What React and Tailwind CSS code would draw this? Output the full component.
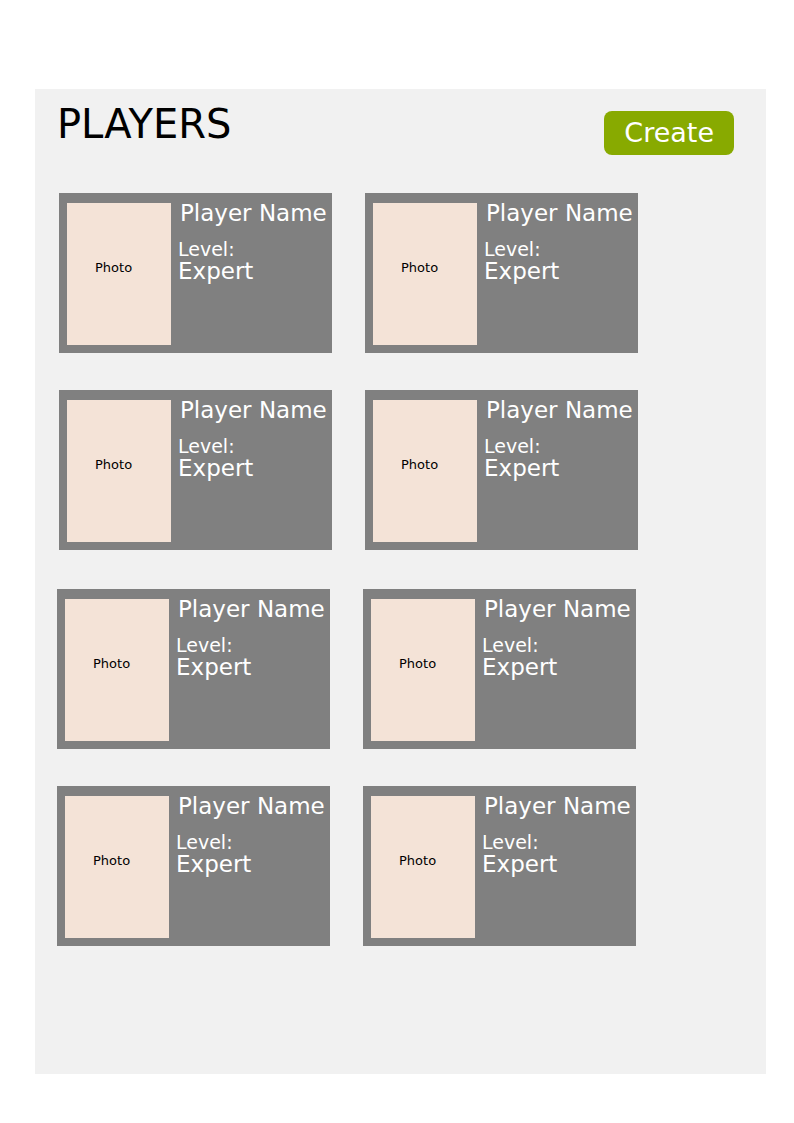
const players = Array.from({ length: 8 }, (_, i) => ({
  id: i + 1,
  name: 'Player Name',
  level: 'Expert',
}));

function PlayerCard({ player }) {
  return (
    <li className="flex min-h-[160px] bg-[#808080] pt-[10px] pb-2 pl-2 text-white">
      <div className="flex w-[104px] shrink-0 items-center bg-[#f4e3d7] pb-3 pl-7 text-[13px] leading-4 text-black">
        Photo
      </div>
      <div className="-mt-[2px] pl-[7px]">
        <h2 className="pl-[2px] text-[23px] leading-6 whitespace-nowrap">{player.name}</h2>
        <dl className="mt-[14px]">
          <dt className="text-[19px] leading-5">Level:</dt>
          <dd className="text-[23px] leading-6">{player.level}</dd>
        </dl>
      </div>
    </li>
  );
}

function PlayerGroup({ items }) {
  return (
    <ul className="grid grid-cols-[repeat(auto-fill,273px)] gap-x-[33px] gap-y-[37px]">
      {items.map((player) => (
        <PlayerCard key={player.id} player={player} />
      ))}
    </ul>
  );
}

export default function App() {
  return (
    <div className="flex min-h-screen flex-col bg-white pt-[89px] pr-7 pb-[49px] pl-[35px] font-['DejaVu_Sans',sans-serif]">
      <main className="grow bg-[#f1f1f1] pt-[10px]">
        <header className="flex items-start justify-between pr-8 pl-[22px]">
          <h1 className="text-[40px] leading-[50px] text-black">PLAYERS</h1>
          <button
            type="button"
            className="mt-3 h-11 rounded-lg bg-[#88aa00] px-5 text-[27px] leading-8 text-white"
          >
            Create
          </button>
        </header>
        <div className="mt-[38px] pl-6">
          <PlayerGroup items={players.slice(0, 4)} />
        </div>
        <div className="mt-[39px] pl-[22px]">
          <PlayerGroup items={players.slice(4)} />
        </div>
      </main>
    </div>
  );
}
